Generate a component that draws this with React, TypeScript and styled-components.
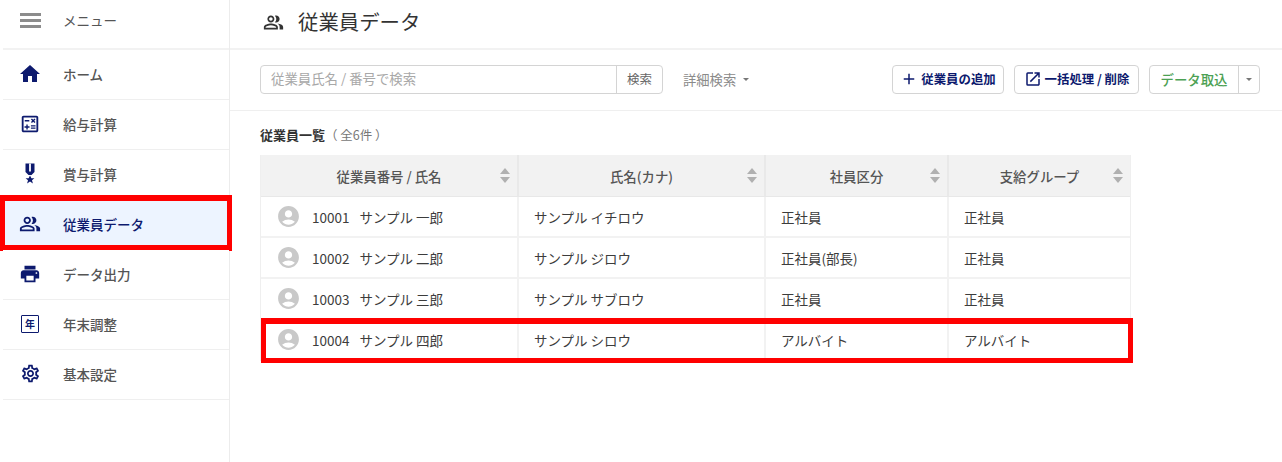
import React from "react";
import styled, { createGlobalStyle } from "styled-components";
import {
  MdAccountCircle,
  MdAdd,
  MdHome,
  MdOpenInNew,
  MdOutlineCalculate,
  MdOutlinePeopleAlt,
  MdOutlineSettings,
  MdPrint,
} from "react-icons/md";

const navy = "#0d1a6e";

const MedalIcon = () => (
  <svg width="24" height="24" viewBox="0 0 24 24" fill={navy}>
    <path d="M7.5 1.5h9v8.5l-3 3h-3l-3-3z" />
    <rect x="11.1" y="1.5" width="1.8" height="8" fill="#fff" />
    <path d="M12 13.4l1.4 2.8h3l-2.4 2 .9 3.2-2.9-1.8-2.9 1.8.9-3.2-2.4-2h3z" />
  </svg>
);

const navItems = [
  { label: "ホーム", icon: <MdHome size={24} /> },
  { label: "給与計算", icon: <MdOutlineCalculate size={22} /> },
  { label: "賞与計算", icon: <MedalIcon /> },
  { label: "従業員データ", icon: <MdOutlinePeopleAlt size={22} />, active: true },
  { label: "データ出力", icon: <MdPrint size={22} /> },
  { label: "年末調整", icon: <YearMark /> },
  { label: "基本設定", icon: <MdOutlineSettings size={21} /> },
];

function YearMark() {
  return <YearBox>年</YearBox>;
}

const employees = [
  { no: "10001", name: "サンプル 一郎", kana: "サンプル イチロウ", type: "正社員", group: "正社員" },
  { no: "10002", name: "サンプル 二郎", kana: "サンプル ジロウ", type: "正社員(部長)", group: "正社員" },
  { no: "10003", name: "サンプル 三郎", kana: "サンプル サブロウ", type: "正社員", group: "正社員" },
  { no: "10004", name: "サンプル 四郎", kana: "サンプル シロウ", type: "アルバイト", group: "アルバイト", marked: true },
];

const columns = ["従業員番号 / 氏名", "氏名(カナ)", "社員区分", "支給グループ"];

const App = () => {
  return (
    <Page>
      <GlobalStyle />
      <Sidebar>
        <MenuRow>
          <Burger>
            <span />
            <span />
            <span />
          </Burger>
          <MenuLabel>メニュー</MenuLabel>
        </MenuRow>
        {navItems.map((item) => (
          <NavItem key={item.label} $active={item.active}>
            <NavIcon>{item.icon}</NavIcon>
            {item.label}
          </NavItem>
        ))}
      </Sidebar>
      <Main>
        <Header>
          <MdOutlinePeopleAlt size={21} color="#333" />
          <Title>従業員データ</Title>
        </Header>
        <Toolbar>
          <SearchBox>
            <SearchInput>従業員氏名 / 番号で検索</SearchInput>
            <SearchButton>検索</SearchButton>
          </SearchBox>
          <DetailLink>
            詳細検索
            <Caret />
          </DetailLink>
          <Actions>
            <ActionButton $width={112}>
              <MdAdd size={18} />
              従業員の追加
            </ActionButton>
            <ActionButton $width={125}>
              <MdOpenInNew size={18} />
              一括処理 / 削除
            </ActionButton>
            <SplitButton>
              <ImportPart>データ取込</ImportPart>
              <CaretPart>
                <Caret />
              </CaretPart>
            </SplitButton>
          </Actions>
        </Toolbar>
        <Content>
          <ListTitle>
            従業員一覧<ListCount>（ 全6件 ）</ListCount>
          </ListTitle>
          <Table>
            <HeadRow>
              {columns.map((col) => (
                <HeadCell key={col}>
                  {col}
                  <SortIcon>
                    <i />
                    <b />
                  </SortIcon>
                </HeadCell>
              ))}
            </HeadRow>
            {employees.map((emp) => (
              <Row key={emp.no} $marked={emp.marked}>
                <NameCell>
                  <MdAccountCircle size={25} color="#c9c9c9" />
                  <EmpNo>{emp.no}</EmpNo>
                  {emp.name}
                </NameCell>
                <Cell>{emp.kana}</Cell>
                <Cell>{emp.type}</Cell>
                <Cell>{emp.group}</Cell>
              </Row>
            ))}
          </Table>
        </Content>
      </Main>
    </Page>
  );
};

export default App;

const GlobalStyle = createGlobalStyle`
  body {
    margin: 0;
    background: #fff;
    font-family: "Noto Sans CJK JP", "Noto Sans", sans-serif;
    color: #444;
  }
`;

const Page = styled.div`
  display: flex;
  width: 1282px;
  height: 462px;
  overflow: hidden;
`;

const Sidebar = styled.nav`
  width: 229px;
  height: 462px;
  flex-shrink: 0;
  border-right: 1px solid #ececec;
`;

const MenuRow = styled.div`
  display: flex;
  align-items: center;
  height: 48px;
  padding-left: 17px;
  margin-left: 3px;
  border-bottom: 2px solid #f2f2f2;
`;

const Burger = styled.div`
  display: flex;
  flex-direction: column;
  gap: 3px;
  width: 21px;
  margin-top: -8px;

  span {
    height: 3px;
    background: #8c8c8c;
  }
`;

const MenuLabel = styled.span`
  margin-left: 22px;
  font-size: 13.5px;
  margin-top: -9px;
  color: #555;
`;

const NavItem = styled.div<{ $active?: boolean }>`
  position: relative;
  display: flex;
  align-items: center;
  box-sizing: border-box;
  height: 50px;
  padding-bottom: 2px;
  margin-left: 3px;
  font-size: 13.5px;
  font-weight: 500;
  color: ${(p) => (p.$active ? navy : "#555")};
  background: ${(p) => (p.$active ? "#edf4ff" : "#fff")};
  border-bottom: 1px solid #efefef;

  ${(p) =>
    p.$active &&
    `
    &::after {
      content: "";
      position: absolute;
      left: -3px;
      right: -3px;
      top: -5px;
      bottom: -2px;
      border-style: solid;
      border-color: #ff0000;
      border-width: 6px 5px;
      pointer-events: none;
    }
  `}
`;

const NavIcon = styled.span`
  display: flex;
  justify-content: center;
  width: 24px;
  margin: 0 21px 0 15px;
  color: ${navy};
`;

const YearBox = styled.span`
  display: flex;
  align-items: center;
  justify-content: center;
  width: 16px;
  height: 16px;
  border: 1.5px solid ${navy};
  border-radius: 1px;
  font-size: 10px;
  font-weight: 700;
  line-height: 1;
`;

const Main = styled.main`
  flex: 1;
  min-width: 0;
`;

const Header = styled.header`
  display: flex;
  align-items: center;
  gap: 14px;
  box-sizing: border-box;
  height: 50px;
  padding: 0 0 3px 33px;
  border-bottom: 2px solid #f2f2f2;
`;

const Title = styled.h1`
  margin: -3px 0 0;
  font-size: 20.4px;
  font-weight: 400;
  color: #333;
`;

const Toolbar = styled.div`
  display: flex;
  align-items: center;
  box-sizing: border-box;
  height: 61px;
  padding: 0 22px 2px 30px;
  border-bottom: 1px solid #efefef;
`;

const SearchBox = styled.div`
  display: flex;
  width: 403px;
  height: 29px;
  box-sizing: border-box;
  border: 1px solid #d4d4d4;
  border-radius: 4px;
  font-size: 13.4px;
`;

const SearchInput = styled.div`
  flex: 1;
  padding-left: 10px;
  line-height: 25px;
  color: #a8a8a8;
  border-right: 1px solid #d4d4d4;
`;

const SearchButton = styled.div`
  width: 45px;
  text-align: center;
  line-height: 25px;
  font-size: 12.5px;
  color: #666;
`;

const DetailLink = styled.div`
  display: flex;
  align-items: center;
  gap: 7px;
  margin-left: 20px;
  font-size: 13.3px;
  color: #8a8a8a;
`;

const Caret = styled.span`
  width: 0;
  height: 0;
  border-left: 3px solid transparent;
  border-right: 3px solid transparent;
  border-top: 3px solid #777;
`;

const Actions = styled.div`
  display: flex;
  gap: 10px;
  margin-left: auto;
`;

const ActionButton = styled.div<{ $width: number }>`
  display: flex;
  align-items: center;
  justify-content: center;
  gap: 3px;
  width: ${(p) => p.$width}px;
  height: 29px;
  box-sizing: border-box;
  border: 1px solid #d4d4d4;
  border-radius: 4px;
  font-size: 12.4px;
  font-weight: 700;
  color: ${navy};
`;

const SplitButton = styled.div`
  display: flex;
  height: 29px;
  box-sizing: border-box;
  border: 1px solid #d4d4d4;
  border-radius: 4px;
`;

const ImportPart = styled.div`
  width: 88px;
  text-align: center;
  line-height: 27px;
  font-size: 13.4px;
  font-weight: 500;
  color: #4ca153;
  border-right: 1px solid #d4d4d4;
`;

const CaretPart = styled.div`
  display: flex;
  align-items: center;
  justify-content: center;
  width: 20px;
`;

const Content = styled.section`
  padding: 15px 0 0 30px;
`;

const ListTitle = styled.div`
  height: 29px;
  line-height: 18px;
  font-size: 13px;
  font-weight: 700;
  color: #333;
`;

const ListCount = styled.span`
  font-size: 12.5px;
  font-weight: 400;
  color: #777;
`;

const Table = styled.div`
  width: 869px;
  border-left: 1px solid #efefef;
  border-right: 1px solid #efefef;
`;

const gridColumns = "258px 247px 183px 181px";

const HeadRow = styled.div`
  display: grid;
  grid-template-columns: ${gridColumns};
  height: 42px;
  background: #f2f2f2;
  border-bottom: 1px solid #e8e8e8;
  box-sizing: border-box;
`;

const HeadCell = styled.div`
  position: relative;
  display: flex;
  align-items: center;
  justify-content: center;
  font-size: 13.4px;
  font-weight: 500;
  color: #555;
  border-right: 2px solid #e9e9e9;

  &:last-child {
    border-right: 0;
  }
`;

const SortIcon = styled.span`
  position: absolute;
  right: 7px;
  top: 13px;
  display: flex;
  flex-direction: column;
  gap: 3px;

  i,
  b {
    width: 0;
    height: 0;
    border-left: 5.5px solid transparent;
    border-right: 5.5px solid transparent;
  }

  i {
    border-bottom: 6px solid #b0b0b0;
  }

  b {
    border-top: 6px solid #b0b0b0;
  }
`;

const Row = styled.div<{ $marked?: boolean }>`
  position: relative;
  display: grid;
  grid-template-columns: ${gridColumns};
  height: 41px;
  box-sizing: border-box;
  border-bottom: 2px solid #f2f2f2;

  ${(p) =>
    p.$marked &&
    `
    &::after {
      content: "";
      position: absolute;
      left: 0;
      right: -3px;
      top: -2px;
      bottom: -4px;
      border-style: solid;
      border-color: #ff0000;
      border-width: 6px 5px 5px;
      pointer-events: none;
    }
  `}
`;

const Cell = styled.div`
  display: flex;
  align-items: center;
  padding: 1px 0 0 15px;
  font-size: 13.5px;
  color: #3c3c3c;
  border-right: 2px solid #f2f2f2;

  &:last-child {
    border-right: 0;
  }
`;

const NameCell = styled(Cell)`
  svg {
    margin-top: -1px;
  }
`;

const EmpNo = styled.span`
  margin: 0 10px 0 11px;
`;
